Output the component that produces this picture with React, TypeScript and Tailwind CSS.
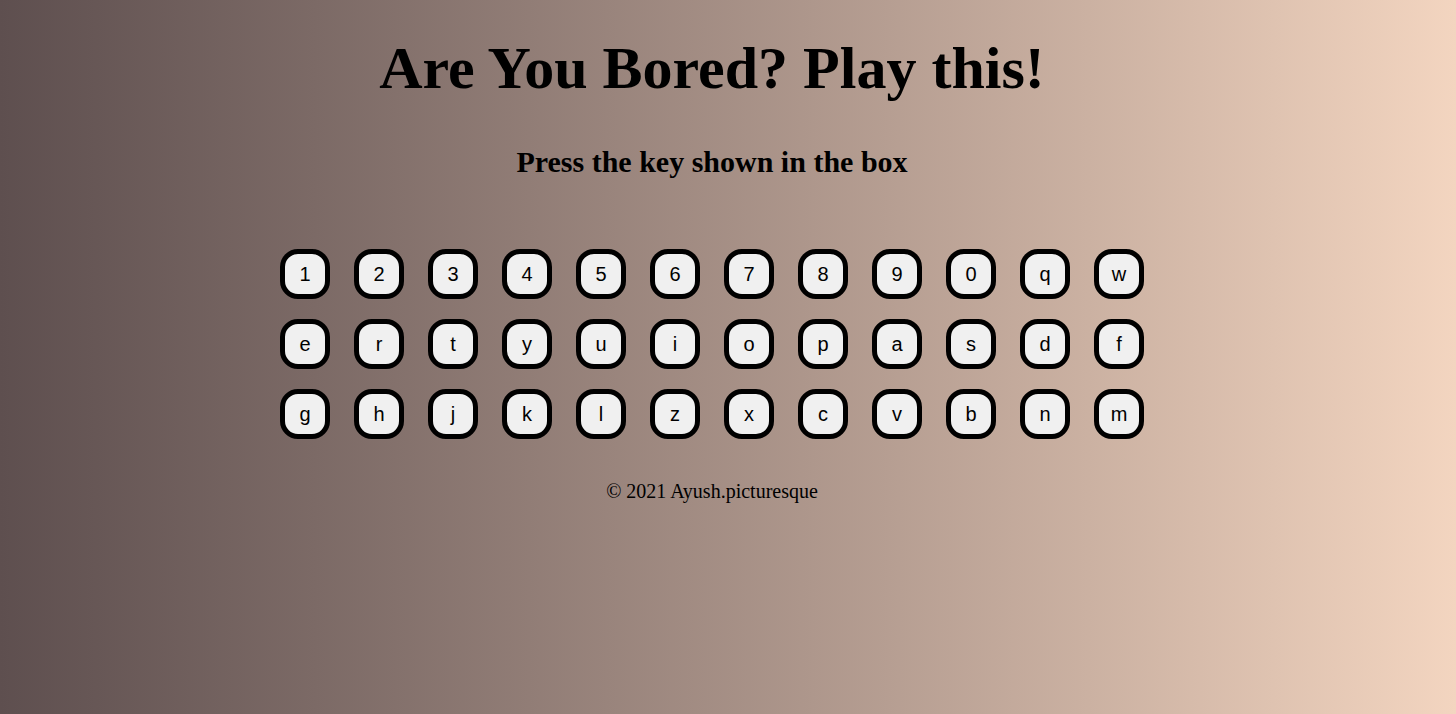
const rows = [
  ['1', '2', '3', '4', '5', '6', '7', '8', '9', '0', 'q', 'w'],
  ['e', 'r', 't', 'y', 'u', 'i', 'o', 'p', 'a', 's', 'd', 'f'],
  ['g', 'h', 'j', 'k', 'l', 'z', 'x', 'c', 'v', 'b', 'n', 'm'],
]

const Key = ({ label }: { label: string }) => (
  <div className="w-[50px] h-[50px] rounded-[18px] border-[5px] border-black bg-[#f0f0f0] flex items-center justify-center text-[20px] text-black font-['Liberation_Sans',sans-serif]">
    {label}
  </div>
)

export default function App() {
  return (
    <div className="min-h-[714px] w-full bg-gradient-to-r from-[#5e4f4f] to-[#f3d5c0] font-['Liberation_Serif',serif] text-black">
      <div className="pr-[32px] flex flex-col items-center">
        {/* Heading */}
        <h1 className="mt-[30px] text-[60px] font-bold leading-[76px]">
          Are You Bored? Play this!
        </h1>
        <h3 className="mt-[39px] text-[30px] font-bold leading-[34px]">
          Press the key shown in the box
        </h3>

        {/* Keyboard */}
        <div className="mt-[70px] flex flex-col gap-[20px]">
          {rows.map((row, i) => (
            <div key={i} className="flex gap-[24px]">
              {row.map((k) => (
                <Key key={k} label={k} />
              ))}
            </div>
          ))}
        </div>

        <p className="mt-[40px] text-[20px] leading-[24px]">© 2021 Ayush.picturesque</p>
      </div>
    </div>
  )
}
